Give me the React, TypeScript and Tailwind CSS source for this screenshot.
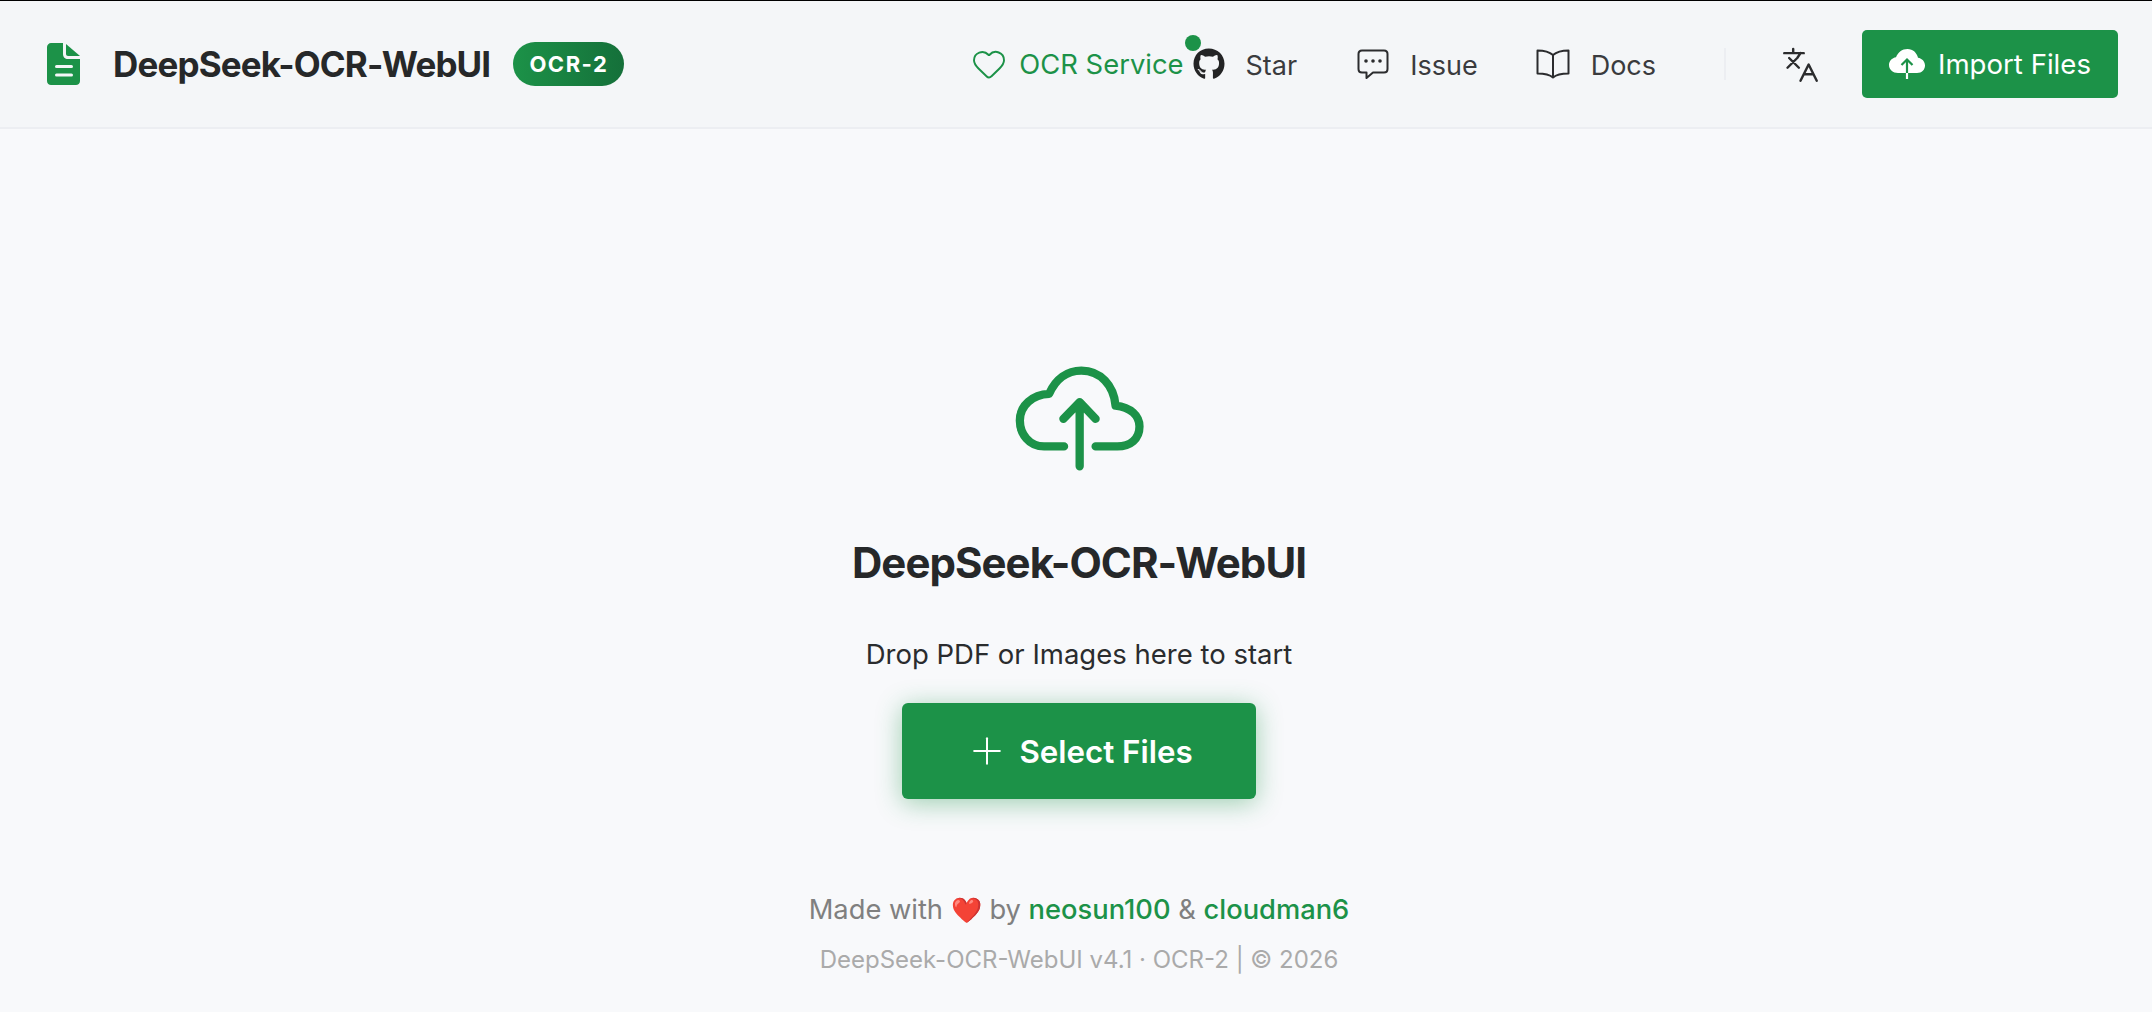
import { Heart, Plus } from "lucide-react";
import { FaGithub } from "react-icons/fa";

function LogoIcon() {
  return (
    <svg viewBox="0 0 33 42" className="w-[33px] h-[42px] shrink-0" fill="#1c9248">
      <path d="M4 0H16V11C16 14 18 16 21 16H33V38C33 40.500 31 42 29 42H4C2 42 0 40.500 0 38V4C0 2 2 0 4 0Z" />
      <path d="M19 1L33 13H21C20 13 19 12 19 11Z" />
      <rect x="8" y="22" width="18" height="3" rx="1.500" fill="#f4f6f8" />
      <rect x="8" y="30.500" width="18" height="3" rx="1.500" fill="#f4f6f8" />
    </svg>
  );
}

function IssueIcon() {
  return (
    <svg viewBox="0 0 32 30" className="w-[32px] h-[30px]" fill="none" stroke="#2b2c2e" strokeWidth="2" strokeLinejoin="round">
      <path d="M5 1.500H27C29 1.500 30.500 3 30.500 5V20C30.500 22 29 23.500 27 23.500H16L9.500 29V23.500H5C3 23.500 1.500 22 1.500 20V5C1.500 3 3 1.500 5 1.500Z" />
      <circle cx="9" cy="12" r="1.800" fill="#2b2c2e" stroke="none" />
      <circle cx="16" cy="12" r="1.800" fill="#2b2c2e" stroke="none" />
      <circle cx="23" cy="12" r="1.800" fill="#2b2c2e" stroke="none" />
    </svg>
  );
}

function BookIcon() {
  return (
    <svg viewBox="0 0 34 30" className="w-[34px] h-[30px]" fill="none" stroke="#2b2c2e" strokeWidth="2" strokeLinejoin="round">
      <path d="M17 6C13 2.500 8 1.500 1.500 1.500V24.500C8 24.500 13 25 17 28.500C21 25 26 24.500 32.500 24.500V1.500C26 1.500 21 2.500 17 6Z" />
      <path d="M17 6V28.500" />
    </svg>
  );
}

function TranslateIcon() {
  return (
    <svg viewBox="0 0 24 24" className="w-[39px] h-[39px]" fill="none" stroke="#2b2c2e" strokeWidth="1.500" strokeLinecap="round" strokeLinejoin="round">
      <path d="M2 5h12M7.500 2.500V5M5 8l6 6M4 14l6-6 2-3M22 22l-5-10-5 10M14 18h6" />
    </svg>
  );
}

function CloudFilled() {
  return (
    <svg viewBox="0 0 36 30" className="w-[36px] h-[30px] shrink-0">
      <path fill="#fff" d="M9 24C4 24 0 20.500 0 16C0 12 3 9 7 8.300C9 3.500 13 0 18.500 0C24 0 28 4 29 8.800C33 9.500 36 12.500 36 16.500C36 20.500 33 24 28 24Z" />
      <path fill="none" stroke="#1c9248" strokeWidth="2.200" d="M12.500 16L18 10.500L23.500 16" />
      <path stroke="#1c9248" strokeWidth="2.200" d="M18 11V24" />
      <path stroke="#fff" strokeWidth="2.200" d="M18 24V30" />
    </svg>
  );
}

function CloudUpload() {
  return (
    <svg viewBox="160 73 390 322" className="w-[130px] h-[107px]" fill="none" stroke="#1c9248" strokeWidth="25" strokeLinecap="round" strokeLinejoin="round">
      <path d="M310 318H250C205 318 177 280 177 240C177 195 215 162 265 160C285 115 320 90 362 90C420 90 460 135 465 195C510 200 537 225 537 258C537 295 510 318 470 318H405" />
      <path d="M357 378V185M308 235L357 185L405 235" />
    </svg>
  );
}

function NavItem({ icon, label }: { icon: React.ReactNode; label: string }) {
  return (
    <div className="flex items-center gap-[21px] text-[27px] leading-none text-[#3a3b3e]">
      {icon}
      <span className="pt-[2px]">{label}</span>
    </div>
  );
}

export default function App() {
  return (
    <div className="h-[1012px] overflow-hidden bg-[#f8f9fb] font-['Inter',sans-serif] border-t border-black">
      <header className="h-[128px] flex items-center justify-between pl-[47px] pr-[34px] bg-[#f4f6f8] border-b-2 border-[#eceef2]">
        <div className="flex items-center">
          <LogoIcon />
          <span className="ml-[33px] pt-[1px] text-[35px] font-bold tracking-[-0.85px] text-[#262829]">DeepSeek-OCR-WebUI</span>
          <span className="ml-[23px] h-[44px] w-[111px] rounded-[22px] flex items-center justify-center bg-gradient-to-r from-[#1c9248] to-[#15703a] text-white text-[22px] font-bold tracking-[1.5px]">
            OCR-2
          </span>
        </div>
        <div className="flex items-center">
          <div className="relative flex items-center gap-[12px] text-[27.4px] leading-none text-[#1c9248]">
            <Heart className="w-[36px] h-[36px]" strokeWidth={1.3} />
            <span className="pt-[2px]">OCR Service</span>
            <span className="absolute right-[-17px] top-[-11px] w-[16px] h-[16px] rounded-full bg-[#1c9248]" />
          </div>
          <div className="ml-[9px]">
            <NavItem icon={<FaGithub className="w-[32px] h-[32px] text-[#232425]" />} label="Star" />
          </div>
          <div className="ml-[60px]">
            <NavItem icon={<IssueIcon />} label="Issue" />
          </div>
          <div className="ml-[58px]">
            <NavItem icon={<BookIcon />} label="Docs" />
          </div>
          <div className="ml-[68px] w-[2px] h-[32px] bg-[#eceef2]" />
          <div className="ml-[55px]">
            <TranslateIcon />
          </div>
          <button className="ml-[42px] h-[68px] w-[256px] rounded-[5px] bg-[#1c9248] flex items-center justify-center gap-[13px] text-white text-[27.6px]">
            <CloudFilled />
            <span className="pt-[2px]">Import Files</span>
          </button>
        </div>
      </header>
      <main className="flex flex-col items-center pl-[6px]">
        <div className="mt-[236px]">
          <CloudUpload />
        </div>
        <h1 className="mt-[67px] text-[42px] leading-[48px] font-bold tracking-[-0.95px] text-[#262829]">DeepSeek-OCR-WebUI</h1>
        <p className="mt-[47px] text-[27.5px] leading-[40px] text-[#2a2c2e]">Drop PDF or Images here to start</p>
        <button className="mt-[29px] w-[354px] h-[96px] rounded-[6px] bg-[#1c9248] flex items-center justify-center gap-[10px] text-white text-[31.3px] font-semibold shadow-[0_4px_26px_rgba(30,148,73,0.42)]">
          <Plus className="w-[44px] h-[44px]" strokeWidth={1.1} />
          <span className="pt-[2px]">Select Files</span>
        </button>
        <p className="mt-[90px] text-[27.3px] leading-[40px] text-[#808080]">
          Made with <span className="font-['Noto_Sans'] text-[25px]">❤️</span> by <span className="font-medium text-[#1c9248]">neosun100</span> &amp; <span className="font-medium text-[#1c9248]">cloudman6</span>
        </p>
        <p className="mt-[14px] text-[24px] leading-[32px] text-[#aaaaaa]">DeepSeek-OCR-WebUI v4.1 · OCR-2 | © 2026</p>
      </main>
    </div>
  );
}
